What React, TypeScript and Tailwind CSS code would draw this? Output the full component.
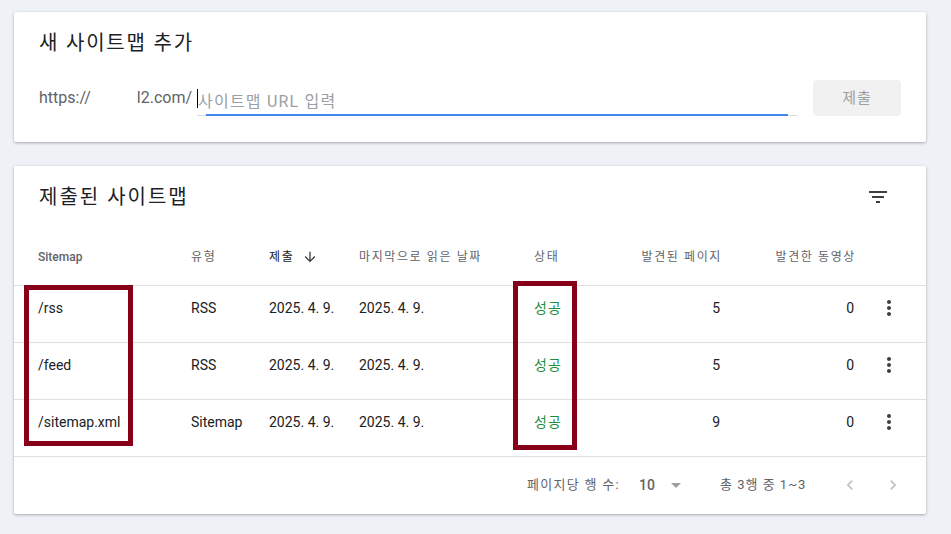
const rows = [
  { path: "/rss", type: "RSS", pages: 5, videos: 0 },
  { path: "/feed", type: "RSS", pages: 5, videos: 0 },
  { path: "/sitemap.xml", type: "Sitemap", pages: 9, videos: 0 },
];

const font = { fontFamily: 'Roboto, "Noto Sans CJK KR", sans-serif' };

const grid = "grid grid-cols-[153px_78px_90px_175px_66px_120px_134px_1fr]";

function FilterIcon() {
  return (
    <svg width="24" height="24" viewBox="0 0 24 24" fill="#3c4043">
      <path d="M10 18h4v-2h-4v2zM3 6v2h18V6H3zm3 7h12v-2H6v2z" />
    </svg>
  );
}

function MoreIcon() {
  return (
    <svg width="24" height="24" viewBox="0 0 24 24" fill="#3c4043">
      <path d="M12 8c1.1 0 2-.9 2-2s-.9-2-2-2-2 .9-2 2 .9 2 2 2zm0 2c-1.1 0-2 .9-2 2s.9 2 2 2 2-.9 2-2-.9-2-2-2zm0 6c-1.1 0-2 .9-2 2s.9 2 2 2 2-.9 2-2-.9-2-2-2z" />
    </svg>
  );
}

export default function App() {
  return (
    <div
      className="relative w-[951px] h-[534px] bg-[#eef1f6] pt-[12px] pl-[14px] text-[#202124]"
      style={font}
    >
      {/* 새 사이트맵 추가 */}
      <div className="w-[912px] h-[130px] bg-white rounded-[2px] shadow-[0_1px_3px_rgba(60,64,67,0.4)] px-[25px] pt-[17px]">
        <h2 className="text-[20px] leading-[28px] tracking-[1.8px] text-[#202124]">새 사이트맵 추가</h2>

        <div className="mt-[23px] flex items-end h-[36px]">
          <div className="flex items-center h-[34px] text-[16px] text-[#5f6368] pb-[2px]">
            <span>https://</span>
            <span className="inline-block w-[46px]" />
            <span>l2.com/</span>
          </div>

          <div className="relative ml-[5px] w-[600px] h-[34px] border-b border-[#dadce0] flex items-center">
            <span className="w-px h-[19px] bg-black" />
            <span className="text-[16px] tracking-[1.2px] text-[#9aa0a6] mt-[6px]">사이트맵 URL 입력</span>
            <span className="absolute left-[9px] right-[9px] bottom-[-1px] h-[2px] bg-[#4285f4]" />
          </div>

          <button className="ml-[16px] w-[88px] h-[36px] rounded-[4px] bg-[#f1f1f1] text-[15px] tracking-[1px] text-[#9e9e9e]">
            제출
          </button>
        </div>
      </div>

      {/* 제출된 사이트맵 */}
      <div className="mt-[24px] w-[912px] h-[348px] bg-white rounded-[2px] shadow-[0_1px_3px_rgba(60,64,67,0.4)]">
        <div className="flex items-center justify-between pl-[25px] pr-[36px] pt-[17px] h-[45px]">
          <h2 className="text-[20px] leading-[28px] tracking-[2px] text-[#202124]">제출된 사이트맵</h2>
          <FilterIcon />
        </div>

        <div className={`${grid} mt-[18px] h-[57px] items-center pl-[24px] pb-[1px] border-b border-[#e0e0e0] text-[12px] text-[#5f6368]`}>
          <div className="font-medium">Sitemap</div>
          <div className="tracking-[1.6px]">유형</div>
          <div className="flex items-center gap-[8px] tracking-[1.6px] text-[#202124]">
            제출
            <svg width="16" height="16" viewBox="0 0 24 24" fill="#3c4043">
              <path d="M20 12l-1.41-1.41L13 16.17V4h-2v12.17l-5.58-5.59L4 12l8 8 8-8z" />
            </svg>
          </div>
          <div className="tracking-[1.6px]">마지막으로 읽은 날짜</div>
          <div className="tracking-[1.6px]">상태</div>
          <div className="text-right tracking-[1.6px] mr-[-2px]">발견된 페이지</div>
          <div className="text-right tracking-[1.6px] mr-[-2px]">발견한 동영상</div>
          <div />
        </div>

        {rows.map((r) => (
          <div
            key={r.path}
            className={`${grid} h-[57px] items-center pl-[24px] pb-[12px] border-b border-[#e0e0e0] text-[14px] text-[#202124]`}
          >
            <div>{r.path}</div>
            <div>{r.type}</div>
            <div>2025. 4. 9.</div>
            <div>2025. 4. 9.</div>
            <div className="text-[#1e8e3e] tracking-[1px]">성공</div>
            <div className="text-right">{r.pages}</div>
            <div className="text-right">{r.videos}</div>
            <div className="pl-[23px] flex">
              <MoreIcon />
            </div>
          </div>
        ))}

        <div className="flex items-center h-[56px] text-[13px] text-[#5f6368]">
          <div className="ml-[513px] tracking-[1.3px]">페이지당 행 수:</div>
          <div className="ml-[19px] text-[#5f6368] font-medium text-[14px]">10</div>
          <svg className="ml-[9px]" width="24" height="24" viewBox="0 0 24 24" fill="#9e9e9e">
            <path d="M7 10l5 5 5-5z" />
          </svg>
          <div className="ml-[32px] tracking-[1px]">총 3행 중 1~3</div>
          <svg className="ml-[34px]" width="20" height="20" viewBox="0 0 24 24" fill="#bdc1c6">
            <path d="M15.41 7.41L14 6l-6 6 6 6 1.41-1.41L10.83 12z" />
          </svg>
          <svg className="ml-[23px]" width="20" height="20" viewBox="0 0 24 24" fill="#bdc1c6">
            <path d="M10 6L8.59 7.41 13.17 12l-4.58 4.59L10 18l6-6z" />
          </svg>
        </div>
      </div>

      {/* annotation boxes */}
      <div className="absolute left-[24px] top-[285px] w-[109px] h-[161px] border-[5px] border-[#860019]" />
      <div className="absolute left-[513px] top-[281px] w-[64px] h-[169px] border-[5px] border-[#860019]" />
    </div>
  );
}
